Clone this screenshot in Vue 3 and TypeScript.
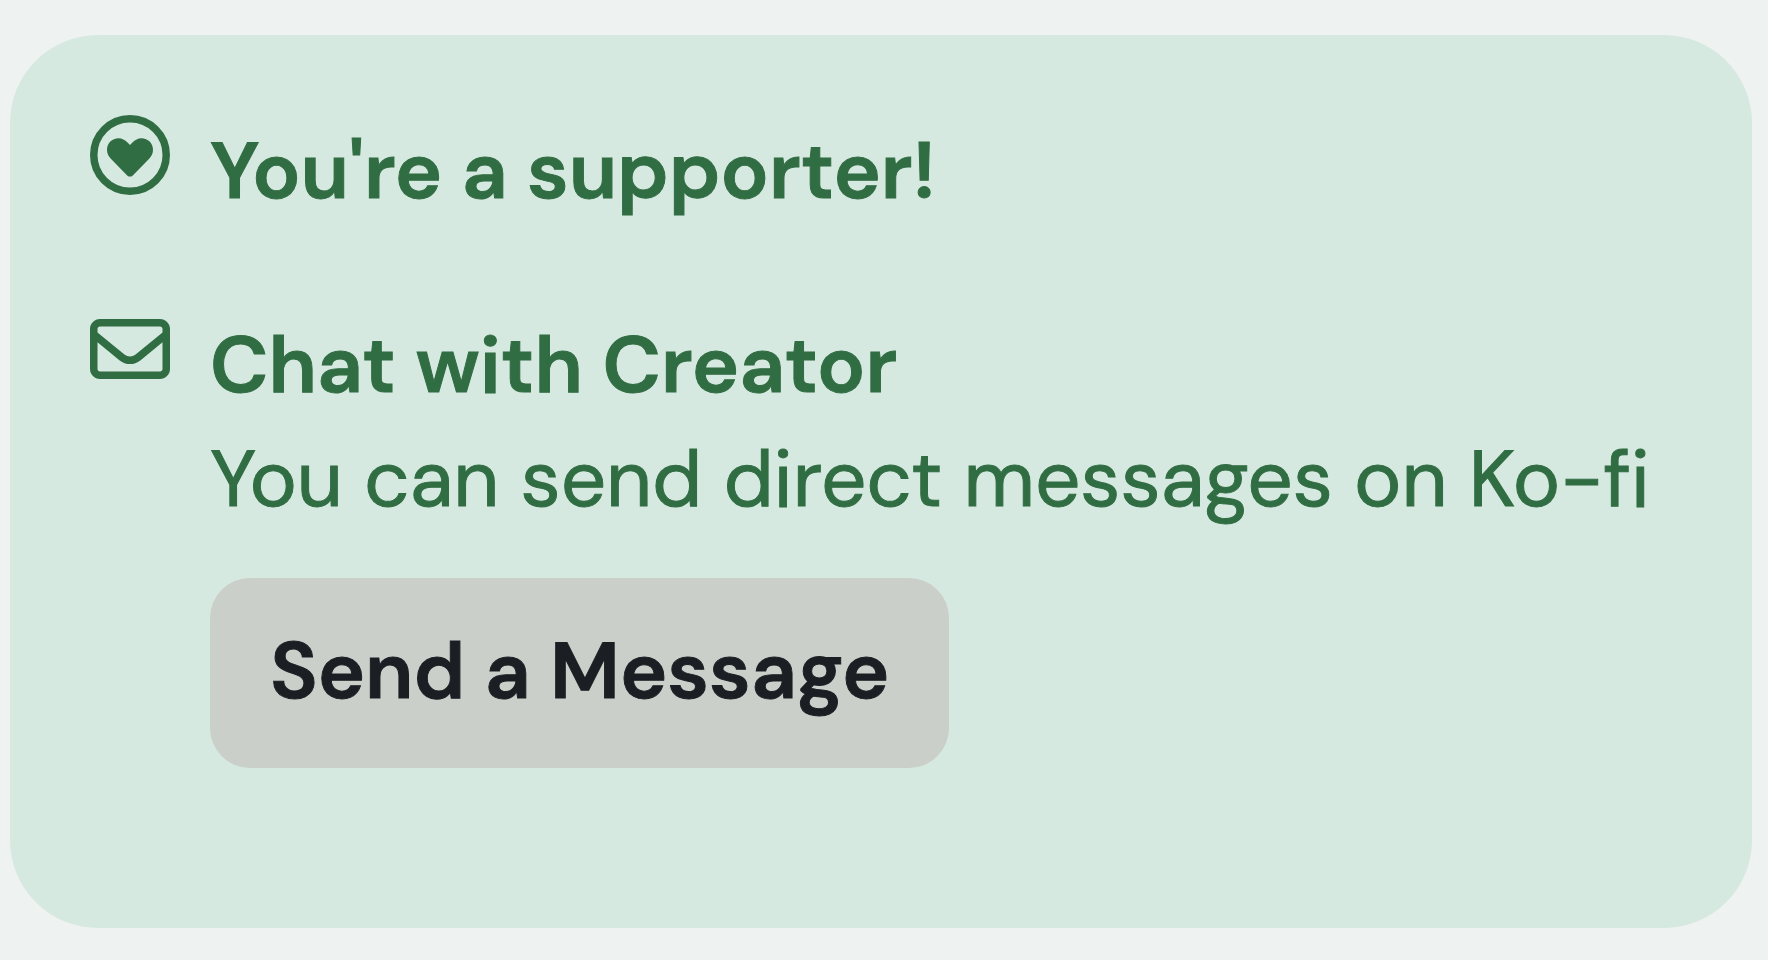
<script setup lang="ts">
interface Conversation {
  title: string
  description: string
  action: string
}

const supporterTitle: string = "You're a supporter!"

const conversation: Conversation = {
  title: 'Chat with Creator',
  description: 'You can send direct messages on Ko-fi',
  action: 'Send a Message',
}
</script>

<template>
  <main class="page">
    <section class="card" aria-label="Supporter benefits">
      <div class="row">
        <svg class="icon" viewBox="0 0 80 80" aria-hidden="true">
          <circle cx="40" cy="40" r="36.25" fill="none" stroke="currentColor" stroke-width="7.5" />
          <path
            fill="currentColor"
            d="M40 30 37.8 27.8C34.8 24.8 32 23.2 28.6 23.2 22 23.2 17 28.3 17 34.8c0 3.400 1.300 6.400 3.600 8.700L37.200 60.400c1.500 1.600 4.100 1.600 5.600 0L59.400 43.500c2.300-2.300 3.600-5.300 3.600-8.700 0-6.500-5-11.600-11.600-11.600-3.400 0-6.200 1.600-9.200 4.600Z"
          />
        </svg>
        <h2 class="title">{{ supporterTitle }}</h2>
      </div>

      <div class="row">
        <svg class="icon" viewBox="0 0 512 512" aria-hidden="true">
          <path
            fill="currentColor"
            d="M64 112c-8.800 0-16 7.200-16 16v22.100L220.500 291.700c20.700 17 50.400 17 71.100 0L464 150.100V128c0-8.800-7.200-16-16-16H64zM48 212.200V384c0 8.800 7.200 16 16 16H448c8.800 0 16-7.200 16-16V212.200L322 328.800c-38.400 31.500-93.700 31.500-132 0L48 212.200zM0 128C0 92.700 28.700 64 64 64H448c35.300 0 64 28.700 64 64V384c0 35.300-28.700 64-64 64H64c-35.300 0-64-28.700-64-64V128z"
          />
        </svg>
        <div class="content">
          <h2 class="title">{{ conversation.title }}</h2>
          <p class="description">{{ conversation.description }}</p>
          <button class="action" type="button">{{ conversation.action }}</button>
        </div>
      </div>
    </section>
  </main>
</template>

<style>
body {
  margin: 0;
  background: #eef2f1;
}
</style>

<style scoped>
.page {
  padding: 35px 16px 32px 10px;
  font-family: 'DM Sans', 'Open Sans', sans-serif;
  font-optical-sizing: none;
  font-variant-ligatures: none;
  -webkit-text-stroke: 1px currentColor;
}

.card {
  display: flex;
  flex-direction: column;
  gap: 82px;
  padding: 80px 80px 160px;
  border-radius: 88px;
  background: #d6e9e1;
  color: #316d43;
}

.row {
  display: flex;
  align-items: flex-start;
  gap: 40px;
}

.icon {
  flex: none;
  width: 80px;
  height: 80px;
}

.content {
  flex: 1;
  min-width: 0;
}

.title,
.description {
  margin: 0;
  font-size: 80px;
  line-height: 112px;
}

.title {
  font-weight: 600;
}

.description {
  margin-top: 2px;
  font-weight: 400;
}

.action {
  display: block;
  margin: 43px 0 0;
  padding: 37px 60px 41px;
  border: 0;
  border-radius: 40px;
  background: #cacfc9;
  color: #1b1f24;
  font-family: inherit;
  font-size: 80px;
  font-weight: 600;
  line-height: 112px;
  cursor: pointer;
}
</style>
